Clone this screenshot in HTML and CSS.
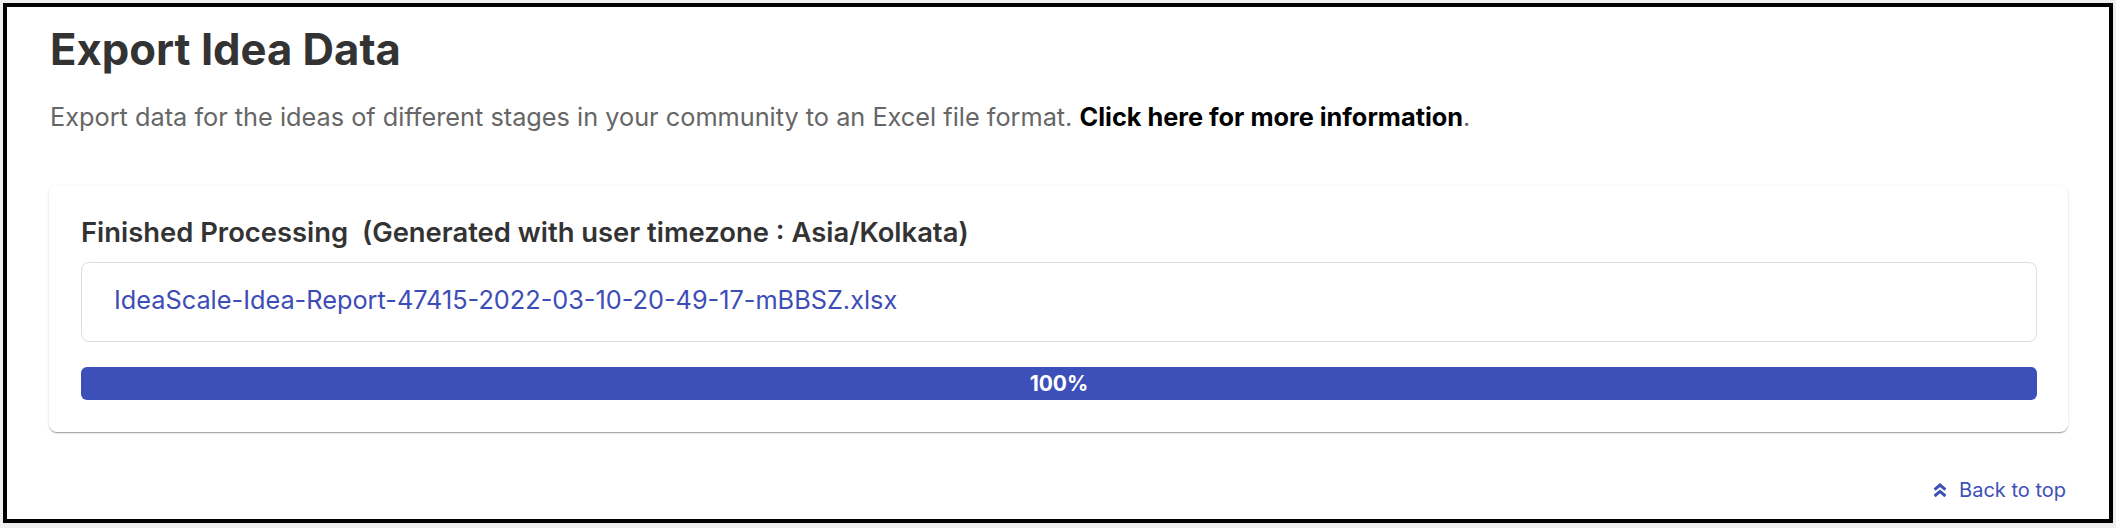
FILE: index.html
```html
<!DOCTYPE html>
<html lang="en">
<head>
  <meta charset="UTF-8" />
  <title>Export Idea Data</title>
  <link rel="stylesheet" href="styles.css">
</head>
<body>

  <div class="frame">
    <!-- Page header -->
    <h1 class="title">Export Idea Data</h1>
    <p class="intro">
      Export data for the ideas of different stages in your community to an Excel file format.
      <a href="#" class="info-link">Click here for more information</a>.
    </p>

    <!-- Export result card -->
    <div class="card">
      <h2 class="card-title">Finished Processing&nbsp; (Generated with user timezone : Asia/Kolkata)</h2>
      <div class="file-box">
        <a href="#" class="file-link">IdeaScale-Idea-Report-47415-2022-03-10-20-49-17-mBBSZ.xlsx</a>
      </div>
      <div class="progress">
        <div class="progress-bar" style="width: 100%;">100%</div>
      </div>
    </div>

    <div class="back-row">
      <a href="#" class="back-top">
        <svg width="14" height="15" viewBox="0 0 14 15" aria-hidden="true">
          <path d="M1.6 6.6 L7 2 L12.4 6.6" fill="none" stroke="currentColor" stroke-width="3" />
          <path d="M1.6 13 L7 8.4 L12.4 13" fill="none" stroke="currentColor" stroke-width="3" />
        </svg>
        Back to top
      </a>
    </div>
  </div>

</body>
</html>
```

FILE: styles.css
```css
html {
  background: #efefef;
}

body {
  margin: 3px;
  font-family: Inter, 'Noto Sans', sans-serif;
  color: #333;
}

.frame {
  box-sizing: border-box;
  height: 520px;
  border: 4px solid #000;
  background: #fff;
  padding: 17px 41px 0 42px;
  display: flex;
  flex-direction: column;
}

.title {
  margin: 0 0 0 1px;
  font-size: 43.6px;
  font-weight: 700;
  line-height: 1.2;
  color: #333;
}

.intro {
  margin: 22px 0 0 1px;
  font-size: 25.3px;
  line-height: 1.5;
  color: #666;
}

.info-link {
  color: #000;
  font-weight: 700;
  text-decoration: none;
}

/* Card */
.card {
  margin-top: 49px;
  padding: 31px 31px 32px 32px;
  background: #fff;
  border-radius: 8px;
  box-shadow: 0 2px 1px -1px rgba(0,0,0,0.2), 0 1px 1px 0 rgba(0,0,0,0.14), 0 1px 3px 0 rgba(0,0,0,0.12);
}

.card-title {
  margin: 0;
  font-size: 27.4px;
  font-weight: 600;
  line-height: 1.2;
  color: #333;
}

.file-box {
  margin-top: 13px;
  padding: 21px 32px 22px;
  border: 1px solid #ddd;
  border-radius: 8px;
  line-height: 32px;
}

.file-link {
  font-size: 25.3px;
  color: #3d4db7;
  text-decoration: none;
}

.progress {
  margin-top: 25px;
  height: 33px;
  border-radius: 6px;
  background: #e0e3f4;
  overflow: hidden;
}

.progress-bar {
  height: 100%;
  background: #3d4fb8;
  color: #fff;
  font-size: 21px;
  font-weight: 700;
  line-height: 33px;
  text-align: center;
}

.back-row {
  margin-top: 43px;
  display: flex;
  justify-content: flex-end;
  padding-right: 2px;
}

.back-top {
  display: flex;
  align-items: center;
  gap: 12px;
  font-size: 20px;
  line-height: 1.5;
  color: #3d4fb8;
  text-decoration: none;
}
```
